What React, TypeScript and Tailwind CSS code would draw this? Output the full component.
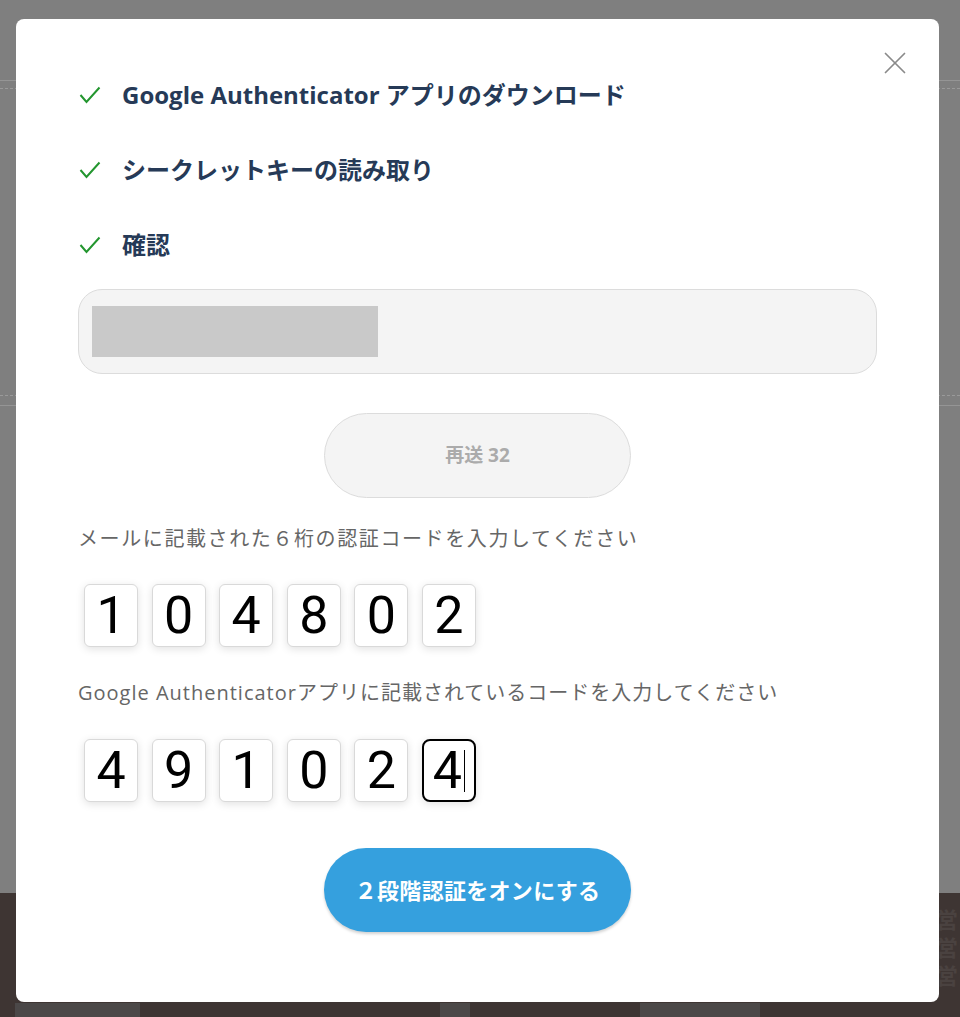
import { X } from 'lucide-react';

const steps = ['Google Authenticator アプリのダウンロード', 'シークレットキーの読み取り', '確認'];
const mailCode = ['1', '0', '4', '8', '0', '2'];
const appCode = ['4', '9', '1', '0', '2', '4'];

function CheckMark() {
  return (
    <svg width="22" height="18" viewBox="0 0 22 18" fill="none" className="shrink-0">
      <path d="M1.5 9 L7.5 16 L20.5 1.5" stroke="#23962f" strokeWidth="2" />
    </svg>
  );
}

function CodeBox({ value, active }: { value: string; active?: boolean }) {
  return (
    <div
      className={`flex h-[63px] w-[54px] items-center justify-center bg-white shadow-[0_2px_8px_rgba(0,0,0,0.12)] ${
        active ? 'rounded-lg border-2 border-black' : 'rounded-md border border-[#d9d9d9]'
      }`}
    >
      <span className="font-['Roboto',sans-serif] text-[52px] font-normal leading-none text-black">{value}</span>
      {active && <span className="ml-[2px] h-[42px] w-px bg-black" />}
    </div>
  );
}

export default function App() {
  return (
    <div className="relative h-[1017px] w-[960px] overflow-hidden bg-[#3e3533] font-['Open_Sans','Noto_Sans_CJK_JP',sans-serif]">
      {/* dimmed page behind the dialog */}
      <div className="h-[893px] bg-[#7f7f7f] pt-[80px]">
        <div className="border-t border-[#959595]" />
        <div className="mt-[7px] border-t border-dashed border-[#9a9a9a]" />
        <div className="mt-[306px] border-t border-dashed border-[#9a9a9a]" />
        <div className="mt-[9px] border-t border-[#959595]" />
      </div>
      <div className="flex h-[110px] justify-end pr-[2px] pt-[12px] text-[22px] font-bold leading-[28px] text-[#4a4240]">
        <div className="flex flex-col">
          <span>営</span>
          <span>営</span>
          <span>営</span>
        </div>
      </div>
      <div className="flex h-[14px]">
        <div className="w-[15px] bg-[#3e3533]" />
        <div className="w-[125px] bg-[#4b4848]" />
        <div className="w-[300px] bg-[#3e3533]" />
        <div className="w-[30px] bg-[#4b4848]" />
        <div className="w-[170px] bg-[#3e3533]" />
        <div className="w-[120px] bg-[#4b4848]" />
      </div>

      {/* dialog */}
      <div className="absolute left-[16px] top-[19px] h-[983px] w-[923px] rounded-lg bg-white px-[62px] pt-[56px]">
        <button className="absolute right-[25px] top-[25px] text-[#8a8a8a]">
          <X size={38} strokeWidth={1.1} />
        </button>

        <div className="flex flex-col gap-[35px]">
          {steps.map(step => (
            <div key={step} className="flex h-[40px] items-center gap-[21px] pl-px">
              <CheckMark />
              <span className="text-[24px] font-bold text-[#263a57]">{step}</span>
            </div>
          ))}
        </div>

        <div className="mt-[24px] flex h-[85px] items-center rounded-[24px] border border-[#dcdcdc] bg-[#f4f4f4] px-[13px]">
          <div className="h-[51px] w-[286px] bg-[#c9c9c9]" />
        </div>

        <div className="mt-[39px] flex justify-center">
          <button className="h-[85px] w-[307px] rounded-full border border-[#dcdcdc] bg-[#f4f4f4] text-[19px] font-bold text-[#ababab]">
            再送 32
          </button>
        </div>

        <p className="mt-[26px] text-[20px] leading-[30px] tracking-[1.6px] text-[#666]">
          メールに記載された６桁の認証コードを入力してください
        </p>
        <div className="mt-[30px] flex gap-[13.6px] pl-[6px]">
          {mailCode.map((d, i) => (
            <CodeBox key={i} value={d} />
          ))}
        </div>

        <p className="mt-[31px] text-[20px] leading-[30px] tracking-[1px] text-[#666]">
          Google Authenticatorアプリに記載されているコードを入力してください
        </p>
        <div className="mt-[31px] flex gap-[13.6px] pl-[6px]">
          {appCode.map((d, i) => (
            <CodeBox key={i} value={d} active={i === appCode.length - 1} />
          ))}
        </div>

        <div className="mt-[46px] flex justify-center">
          <button className="h-[84px] w-[307px] rounded-full bg-[#35a0de] text-[22px] font-bold tracking-[0.3px] text-white shadow-[0_2px_3px_rgba(0,0,0,0.18)]">
            ２段階認証をオンにする
          </button>
        </div>
      </div>
    </div>
  );
}
